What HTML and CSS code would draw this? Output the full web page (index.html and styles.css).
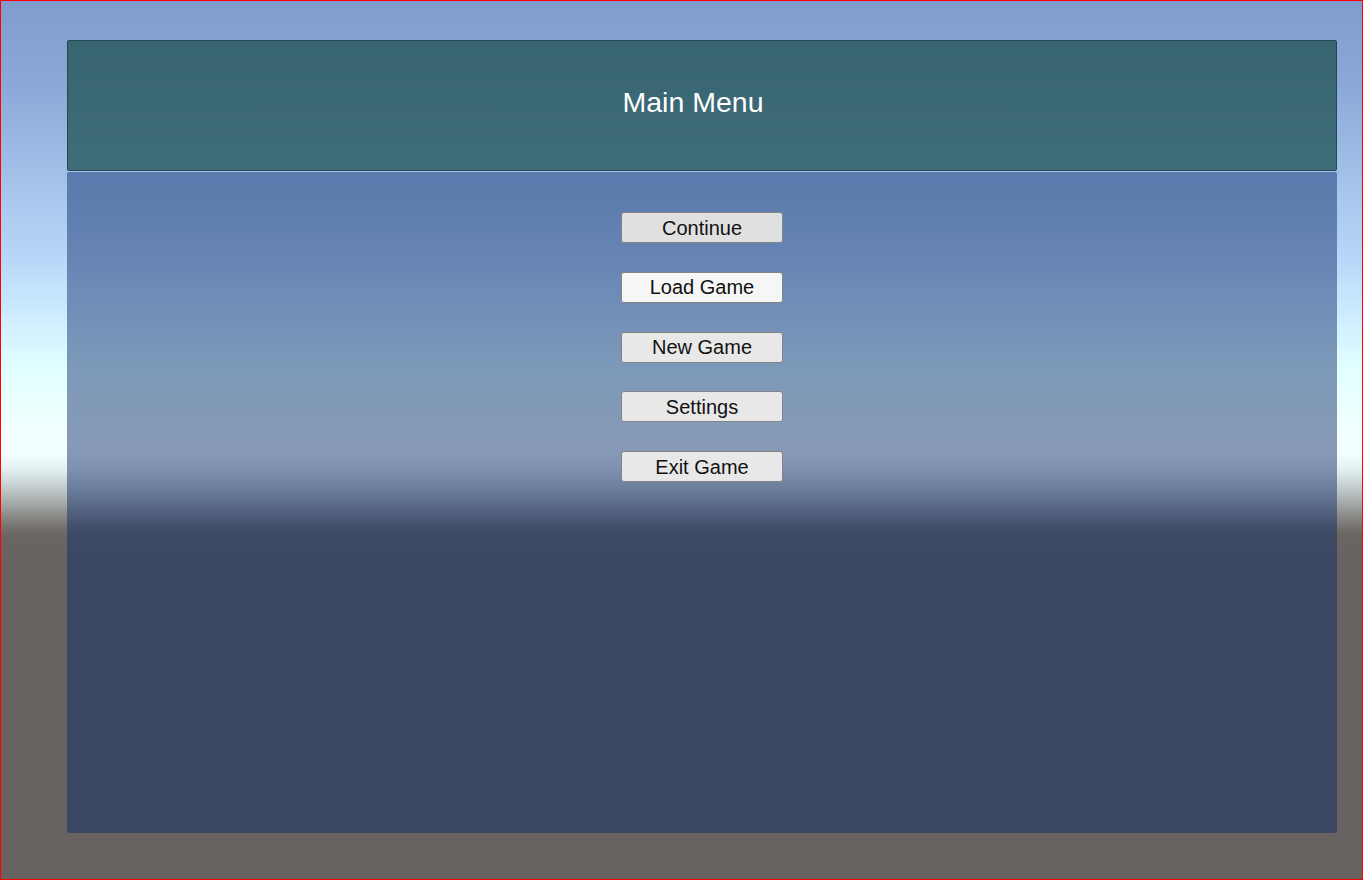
FILE: index.html
```html
<!DOCTYPE html>
<html lang="en">
<head>
<meta charset="utf-8">
<title>Main Menu</title>
<link rel="stylesheet" href="styles.css">
</head>
<body>
<div class="screen">
  <div class="menu">
    <header class="menu-header">
      <h1 class="menu-title">Main Menu</h1>
    </header>
    <main class="menu-body">
      <button class="menu-btn menu-btn--selected">Continue</button>
      <button class="menu-btn menu-btn--hover">Load Game</button>
      <button class="menu-btn">New Game</button>
      <button class="menu-btn">Settings</button>
      <button class="menu-btn">Exit Game</button>
    </main>
  </div>
</div>
</body>
</html>
```

FILE: styles.css
```css
* { box-sizing: border-box; }

html, body {
  margin: 0;
  padding: 0;
  width: 1363px;
  height: 880px;
  overflow: hidden;
}

.screen {
  width: 1363px;
  height: 880px;
  border: 1px solid #ff0000;
  padding: 39px 25px 46px 66px;
  display: flex;
  background: linear-gradient(to bottom,
    #7f9ccb 0px,
    #8caad9 90px,
    #a0c0e8 170px,
    #b8d8f9 260px,
    #d0eeff 320px,
    #e2ffff 370px,
    #f2ffff 430px,
    #f4ffff 452px,
    #e4f0f0 468px,
    #c8d2d2 484px,
    #a9afae 500px,
    #8b8a88 515px,
    #74706c 527px,
    #6a6561 535px,
    #686360 560px,
    #686360 880px);
  font-family: "Liberation Sans", Arial, sans-serif;
}

.menu {
  flex: 1;
  display: flex;
  flex-direction: column;
  gap: 1px;
}

.menu-header {
  height: 131px;
  border: 1px solid rgba(30, 60, 70, 0.75);
  border-radius: 2px;
  background: rgba(26, 77, 76, 0.72);
  display: flex;
  justify-content: center;
  padding-right: 18px;
  padding-top: 45px;
}

.menu-title {
  margin: 0;
  font-weight: normal;
  font-size: 28.5px;
  line-height: 32px;
  color: #ffffff;
}

.menu-body {
  flex: 1;
  background: rgba(10, 40, 105, 0.47);
  border-radius: 2px;
  display: flex;
  flex-direction: column;
  align-items: center;
  gap: 28.75px;
  padding-top: 40px;
}

.menu-btn {
  width: 162px;
  height: 31px;
  border: 1px solid #858585;
  border-radius: 3px;
  background: #e8e8e8;
  color: #111111;
  font-family: "Liberation Sans", Arial, sans-serif;
  font-size: 20px;
  line-height: 28px;
  padding: 0;
}

.menu-btn--selected { background: #e0e0e0; }
.menu-btn--hover { background: #f6f6f6; }
```
